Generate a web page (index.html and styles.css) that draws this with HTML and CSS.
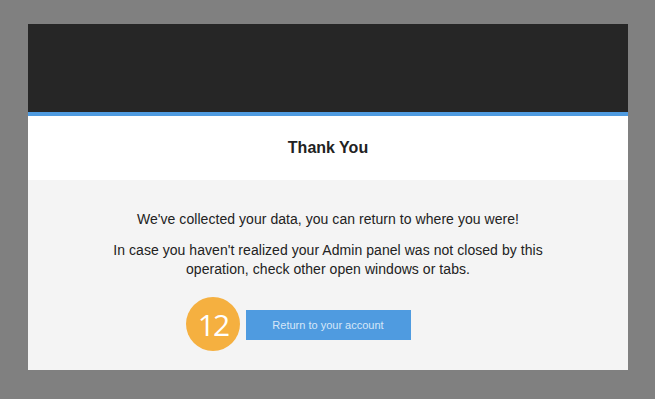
FILE: index.html
```html
<!DOCTYPE html>
<html>
<head>
<meta charset="utf-8">
<link rel="stylesheet" href="styles.css">
</head>
<body>
<div class="dialog">
  <div class="topbar"></div>
  <div class="title-area">
    <h1 class="title">Thank You</h1>
  </div>
  <div class="content">
    <p class="msg">We've collected your data, you can return to where you were!</p>
    <p class="msg second">In case you haven't realized your Admin panel was not closed by this<br>operation, check other open windows or tabs.</p>
    <div class="actions">
      <span class="badge">12</span>
      <button class="btn">Return to your account</button>
    </div>
  </div>
</div>
</body>
</html>
```

FILE: styles.css
```css
html, body {
  margin: 0;
  padding: 0;
}
body {
  background: #808080;
  width: 655px;
  height: 399px;
  padding: 24px 0 0 28px;
  box-sizing: border-box;
  font-family: "Liberation Sans", Arial, sans-serif;
}
.dialog {
  width: 600px;
  display: flex;
  flex-direction: column;
}
.topbar {
  height: 88px;
  background: #262626;
  border-bottom: 4px solid #4f9be0;
}
.title-area {
  height: 64px;
  background: #ffffff;
  display: flex;
  align-items: center;
  justify-content: center;
}
.title {
  margin: 0;
  font-size: 16px;
  font-weight: bold;
  color: #222222;
}
.content {
  background: #f4f4f4;
  padding: 30px 0 30px;
  text-align: center;
  color: #222222;
}
.msg {
  margin: 0;
  font-size: 14px;
  line-height: 19px;
  letter-spacing: 0.05px;
}
.second {
  margin-top: 12px;
}
.actions {
  position: relative;
  margin-top: 31px;
  display: flex;
  justify-content: center;
}
.btn {
  width: 165px;
  height: 30px;
  border: none;
  background: #4f9be0;
  color: #d6e7f8;
  font-family: "Liberation Sans", Arial, sans-serif;
  font-size: 11px;
  font-weight: 300;
  padding: 0;
}
.badge {
  position: absolute;
  left: 158px;
  top: -13px;
  width: 54px;
  height: 54px;
  border-radius: 50%;
  background: #f5b040;
  color: #ffffff;
  font-family: "Open Sans", sans-serif;
  font-weight: 400;
  font-size: 30px;
  letter-spacing: -2px;
  display: flex;
  align-items: center;
  justify-content: center;
}
```
